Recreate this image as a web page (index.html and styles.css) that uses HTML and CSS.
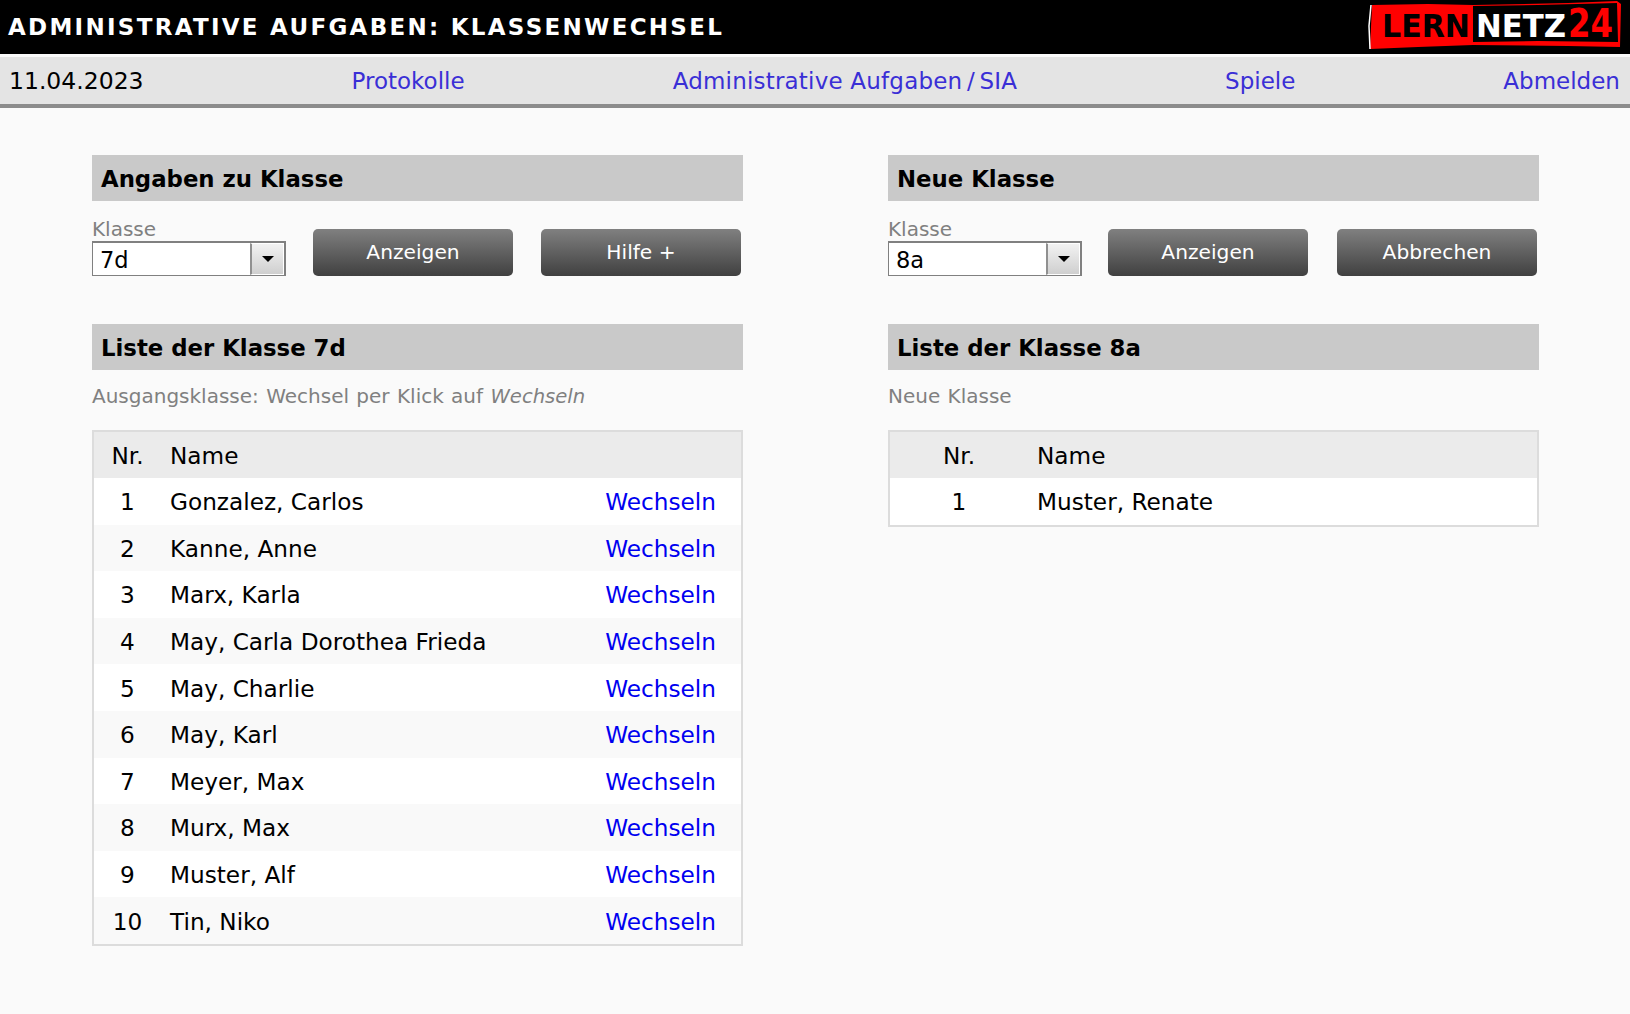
FILE: index.html
```html
<!DOCTYPE html>
<html lang="de">
<head>
<meta charset="utf-8">
<title>Klassenwechsel</title>
<link rel="stylesheet" href="styles.css">
</head>
<body>
<header class="topbar">
  <h1 class="title">ADMINISTRATIVE AUFGABEN: KLASSENWECHSEL</h1>
  <svg class="logo" width="254" height="54" viewBox="0 0 254 54">
    <path d="M4 5 L60 4 L105 5 L200 3 L249 1 L253 4 L252 47 L200 46 L105 45 L50 47 L2 49 Z" fill="#f00"/>
    <path d="M3 5 L1 26 L2 49" fill="none" stroke="#fff" stroke-width="1.5"/>
    <path d="M105 6 L170 5 L249 3 L250 42 L170 41 L105 42 Z" fill="#000"/>
    <text class="logo-lern" x="14" y="37" textLength="88" lengthAdjust="spacingAndGlyphs">LERN</text>
    <text class="logo-netz" x="108" y="37" textLength="90" lengthAdjust="spacingAndGlyphs">NETZ</text>
    <text class="logo-num" x="200" y="37" textLength="45" lengthAdjust="spacingAndGlyphs">24</text>
  </svg>
</header>
<nav class="navbar">
  <span class="date">11.04.2023</span>
  <a href="#">Protokolle</a>
  <a href="#" class="nav-wide">Administrative Aufgaben<span class="tight"> / </span>SIA</a>
  <a href="#">Spiele</a>
  <a href="#">Abmelden</a>
</nav>
<main class="columns">
  <section class="column">
    <h2 class="section-head">Angaben zu Klasse</h2>
    <div class="controls">
      <div class="field">
        <span class="field-label">Klasse</span>
        <div class="select">
          <span class="select-value">7d</span>
          <span class="select-arrow"><i class="caret"></i></span>
        </div>
      </div>
      <button class="btn">Anzeigen</button>
      <button class="btn">Hilfe +</button>
    </div>
    <h2 class="section-head">Liste der Klasse 7d</h2>
    <p class="hint">Ausgangsklasse: Wechsel per Klick auf <em>Wechseln</em></p>
    <div class="list">
      <div class="row head"><span class="nr">Nr.</span><span class="name">Name</span></div>
      <div class="row"><span class="nr">1</span><span class="name">Gonzalez, Carlos</span><a href="#">Wechseln</a></div>
      <div class="row"><span class="nr">2</span><span class="name">Kanne, Anne</span><a href="#">Wechseln</a></div>
      <div class="row"><span class="nr">3</span><span class="name">Marx, Karla</span><a href="#">Wechseln</a></div>
      <div class="row"><span class="nr">4</span><span class="name">May, Carla Dorothea Frieda</span><a href="#">Wechseln</a></div>
      <div class="row"><span class="nr">5</span><span class="name">May, Charlie</span><a href="#">Wechseln</a></div>
      <div class="row"><span class="nr">6</span><span class="name">May, Karl</span><a href="#">Wechseln</a></div>
      <div class="row"><span class="nr">7</span><span class="name">Meyer, Max</span><a href="#">Wechseln</a></div>
      <div class="row"><span class="nr">8</span><span class="name">Murx, Max</span><a href="#">Wechseln</a></div>
      <div class="row"><span class="nr">9</span><span class="name">Muster, Alf</span><a href="#">Wechseln</a></div>
      <div class="row"><span class="nr">10</span><span class="name">Tin, Niko</span><a href="#">Wechseln</a></div>
    </div>
  </section>
  <section class="column column-new">
    <h2 class="section-head">Neue Klasse</h2>
    <div class="controls">
      <div class="field">
        <span class="field-label">Klasse</span>
        <div class="select">
          <span class="select-value">8a</span>
          <span class="select-arrow"><i class="caret"></i></span>
        </div>
      </div>
      <button class="btn">Anzeigen</button>
      <button class="btn">Abbrechen</button>
    </div>
    <h2 class="section-head">Liste der Klasse 8a</h2>
    <p class="hint">Neue Klasse</p>
    <div class="list list-wide">
      <div class="row head"><span class="nr">Nr.</span><span class="name">Name</span></div>
      <div class="row"><span class="nr">1</span><span class="name">Muster, Renate</span></div>
    </div>
  </section>
</main>
</body>
</html>
```
FILE: styles.css
```css
* { box-sizing: border-box; }
html, body { margin: 0; padding: 0; }
body {
  background: #fafafa;
  color: #000;
  font-family: "DejaVu Sans", Verdana, sans-serif;
  height: 1014px;
  overflow: hidden;
}
.topbar {
  height: 54px;
  background: #000;
  display: flex;
  align-items: center;
  justify-content: space-between;
  padding: 0 8px 0 8px;
}
.title {
  margin: 0;
  color: #fff;
  font-size: 23px;
  font-weight: bold;
  letter-spacing: 2.28px;
}
.logo { display: block; }
.logo-lern, .logo-netz, .logo-num {
  font-family: "DejaVu Sans", sans-serif;
  font-weight: bold;
  font-size: 32px;
}
.logo-lern { fill: #000; }
.logo-netz { fill: #fff; }
.logo-num { fill: #f00; font-size: 39px; }
.navbar {
  margin-top: 3px;
  box-sizing: content-box;
  height: 47px;
  background: #e4e4e4;
  border-bottom: 4px solid #8c8c8c;
  display: flex;
  justify-content: space-between;
  align-items: center;
  padding: 0 10px 0 9px;
  font-size: 23px;
}
.date { font-size: 23.5px; }
.navbar a { color: #3a2fd6; text-decoration: none; }
.navbar .nav-wide { letter-spacing: 0.2px; }
.tight { word-spacing: -3px; }
.columns {
  display: grid;
  grid-template-columns: 651px 651px;
  column-gap: 145px;
  padding: 47px 0 0 92px;
}
.section-head {
  margin: 0;
  height: 46px;
  line-height: 48px;
  padding-left: 9px;
  background: #c9c9c9;
  font-size: 22.8px;
  font-weight: bold;
}
.controls {
  display: flex;
  align-items: flex-end;
  height: 123px;
  padding-bottom: 48px;
}
.field { width: 194px; margin-right: 27px; display: flex; flex-direction: column; }
.column-new .field { margin-right: 26px; }
.column-new .btn { margin-right: 29px; }
.column-new .btn:last-child { margin-right: 0; }
.field-label { color: #808080; font-size: 20px; line-height: 24px; }
.select {
  height: 35px;
  width: 194px;
  border: 1px solid #808080;
  border-width: 2px 2px 1px 1px;
  background: #fff;
  display: flex;
  justify-content: space-between;
}
.select-value { font-size: 22.5px; line-height: 34px; padding-left: 7px; }
.select-arrow {
  width: 34px;
  background: linear-gradient(#f2f2f2, #cfcfcf);
  border: 1px solid #fff;
  border-left: 2px solid #909090;
  display: flex;
  align-items: center;
  justify-content: center;
}
.caret {
  width: 0;
  height: 0;
  border: 6px solid transparent;
  border-top: 6px solid #000;
  border-bottom: 0;
}
.btn {
  width: 200px;
  height: 47px;
  margin-right: 28px;
  padding: 0 0 2px;
  border: 0;
  border-radius: 5px;
  background: linear-gradient(#808080, #404040);
  color: #fff;
  font: 20.2px "DejaVu Sans", Verdana, sans-serif;
}
.btn:last-child { margin-right: 0; }
.hint {
  margin: 0;
  height: 60px;
  padding-top: 14px;
  color: #808080;
  font-size: 20px;
  line-height: 24px;
  word-spacing: 1px;
}
.hint em { font-size: 19.6px; }
.list {
  border: 2px solid #dcdcdc;
  background: #fff;
}
.row {
  height: 46.6px;
  display: flex;
  align-items: center;
  font-size: 23.2px;
  padding: 1px 25px 0 0;
}
.row:nth-child(odd) { background: #f9f9f9; }
.row.head { background: #ebebeb; height: 46px; }
.nr { width: 67px; text-align: center; }
.name { flex: 1; padding-left: 9px; }
.row a { color: #0000f0; text-decoration: none; }
.list-wide .nr { width: 138px; }
.list-wide .name { padding-left: 9px; }
```
